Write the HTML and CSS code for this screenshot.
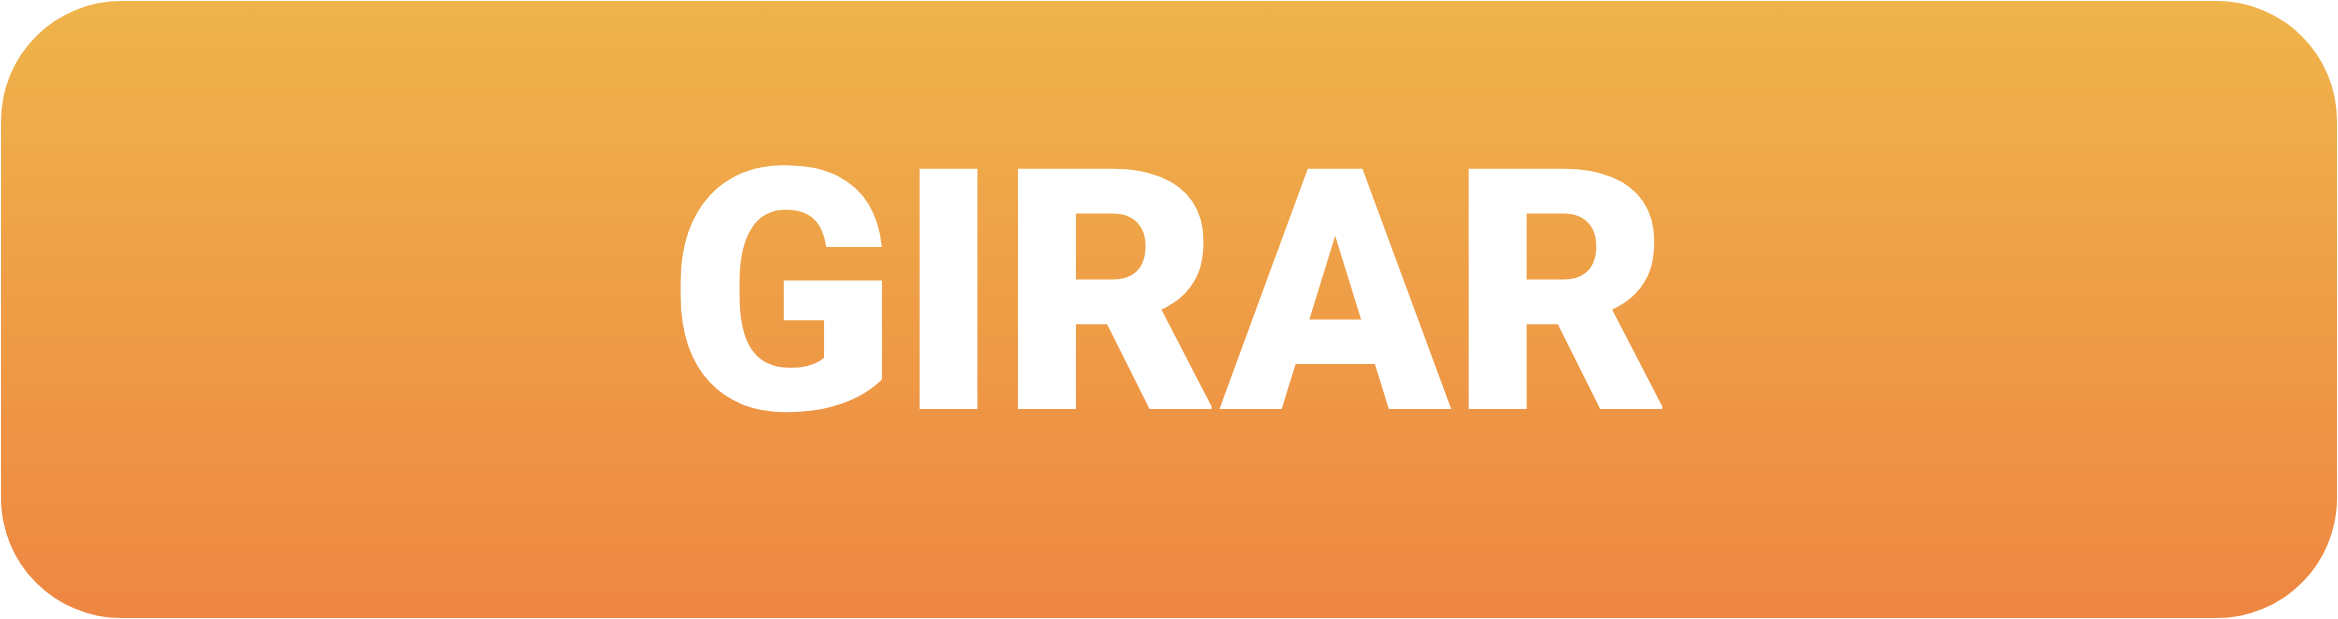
FILE: index.html
```html
<!DOCTYPE html>
<html lang="es">
<head>
<meta charset="utf-8">
<title>GIRAR</title>
<link rel="stylesheet" href="styles.css">
</head>
<body>
<div class="page">
  <button class="btn" type="button">GIRAR</button>
</div>
</body>
</html>
```
FILE: styles.css
```css
html, body {
  margin: 0;
  padding: 0;
  background: #ffffff;
}
.page {
  width: 2338px;
  height: 619px;
  padding: 1px;
  box-sizing: border-box;
  display: flex;
}
.btn {
  flex: 1;
  margin: 0;
  border: none;
  border-radius: 120px;
  background: linear-gradient(to bottom, #efb44b 0%, #ee8642 100%);
  color: #ffffff;
  font-family: Roboto, "Liberation Sans", sans-serif;
  font-weight: 900;
  font-size: 338px;
  line-height: 1;
  padding: 0 0 31px 0;
  display: flex;
  align-items: center;
  justify-content: center;
  cursor: pointer;
}
```
